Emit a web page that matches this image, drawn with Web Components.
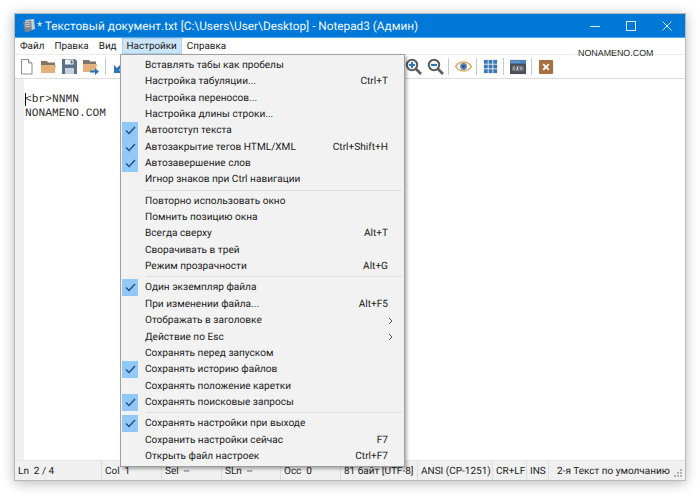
<!doctype html>
<html lang="ru">
<head>
<meta charset="utf-8">
<title>Notepad3</title>
<style>
  html, body { margin: 0; height: 100%; background: #fff; }
  body { padding: 13px 14px 0; box-sizing: border-box; font: 10px Roboto, sans-serif; color: #1a1a1a; overflow: hidden; text-rendering: geometricPrecision; }
</style>
</head>
<body>
<np-window>
  <np-titlebar slot="title">* Текстовый документ.txt [C:\Users\User\Desktop] - Notepad3 (Админ)</np-titlebar>
  <np-menubar slot="menubar"></np-menubar>
  <np-toolbar slot="toolbar"></np-toolbar>
  <np-editor slot="editor"></np-editor>
  <np-statusbar slot="status"></np-statusbar>
  <np-menu slot="overlay"></np-menu>
</np-window>

<script>
// данные меню: check, подпись, шорткат, стрелка подменю
const MENU = [
  [
    { label: 'Вставлять табы как пробелы' },
    { label: 'Настройка табуляции...', key: 'Ctrl+T' },
    { label: 'Настройка переносов...' },
    { label: 'Настройка длины строки...' },
    { label: 'Автоотступ текста', on: true },
    { label: 'Автозакрытие тегов HTML/XML', key: 'Ctrl+Shift+H', on: true },
    { label: 'Автозавершение слов', on: true },
    { label: 'Игнор знаков при Ctrl навигации' },
  ],
  [
    { label: 'Повторно использовать окно' },
    { label: 'Помнить позицию окна' },
    { label: 'Всегда сверху', key: 'Alt+T' },
    { label: 'Сворачивать в трей' },
    { label: 'Режим прозрачности', key: 'Alt+G' },
  ],
  [
    { label: 'Один экземпляр файла', on: true },
    { label: 'При изменении файла...', key: 'Alt+F5' },
    { label: 'Отображать в заголовке', sub: true },
    { label: 'Действие по Esc', sub: true },
    { label: 'Сохранять перед запуском' },
    { label: 'Сохранять историю файлов', on: true },
    { label: 'Сохранять положение каретки' },
    { label: 'Сохранять поисковые запросы', on: true },
  ],
  [
    { label: 'Сохранять настройки при выходе', on: true },
    { label: 'Сохранить настройки сейчас', key: 'F7' },
    { label: 'Открыть файл настроек', key: 'Ctrl+F7' },
  ],
]

const STATUS = [
  ['Ln&nbsp; 2 / 4', 87], ['Col&nbsp; 1', 60], ['Sel&nbsp; --', 60], ['SLn&nbsp; --', 59],
  ['Occ&nbsp; 0', 60], ['81 байт [UTF-8]', 77], ['ANSI (CP-1251)', 75],
  ['CR+LF', 34], ['INS', 22], ['2-я Текст по умолчанию', 0],
]

const ICONS = {
  doc: '<path d="M2.500 1.500h7l3.500 3.500v11h-10.500z" fill="#fff" stroke="#8a8a8a"/><path d="M9.500 1.500v3.500h3.500" fill="#eee" stroke="#8a8a8a"/>',
  open: '<path d="M1 3h6l1 1.500h7v10h-14z" fill="#7f7468"/><path d="M1 7h15l-1.500 8h-13.500z" fill="#e3b27a"/>',
  save: '<path d="M1 1h13l2 2v13h-15z" fill="#5c7187"/><rect x="4" y="1.500" width="8.500" height="5" fill="#eef2f6"/><rect x="4" y="10" width="9" height="6" fill="#c8d2dc"/><rect x="9.500" y="2.500" width="2" height="3" fill="#5c7187"/>',
  saveas: '<path d="M1 2h6l1 1.500h6v10h-13z" fill="#7f7468"/><path d="M1 6h14l-1.500 8h-12.500z" fill="#e3b27a"/><path d="M8 12.500h5v-2.500l4 3.500-4 3.500v-2.500h-5z" fill="#2f74b8"/>',
  undo: '<path d="M14.500 3.500l-8 8" stroke="#2f74b8" stroke-width="3" fill="none"/><path d="M3 7v8h8z" fill="#2f74b8"/>',
  zoomin: '<circle cx="7" cy="7" r="5.200" fill="#eef3f8" stroke="#5a5a5a" stroke-width="2"/><path d="M11 11l5 5" stroke="#5a5a5a" stroke-width="2.600"/><path d="M4 7h6M7 4v6" stroke="#2f74b8" stroke-width="2"/>',
  zoomout: '<circle cx="7" cy="7" r="5.200" fill="#eef3f8" stroke="#5a5a5a" stroke-width="2"/><path d="M11 11l5 5" stroke="#5a5a5a" stroke-width="2.600"/><path d="M4 7h6" stroke="#2f74b8" stroke-width="2"/>',
  eye: '<path d="M.5 8.500c4-6 12-6 16 0-4 6-12 6-16 0z" fill="#fff" stroke="#e0a860" stroke-width="1.500"/><circle cx="8.500" cy="8.500" r="3.400" fill="#5b84ad"/><circle cx="8.500" cy="8.500" r="1.300" fill="#24456b"/>',
  grid: '<g fill="#3c76b3"><rect x="1" y="1" width="4.400" height="4.400"/><rect x="6.300" y="1" width="4.400" height="4.400"/><rect x="11.600" y="1" width="4.400" height="4.400"/><rect x="1" y="6.300" width="4.400" height="4.400"/><rect x="6.300" y="6.300" width="4.400" height="4.400"/><rect x="11.600" y="6.300" width="4.400" height="4.400"/><rect x="1" y="11.600" width="4.400" height="4.400"/><rect x="6.300" y="11.600" width="4.400" height="4.400"/><rect x="11.600" y="11.600" width="4.400" height="4.400"/></g>',
  code: '<rect x="0" y="1" width="17" height="15" fill="#4a4f57"/><rect x="0" y="1" width="17" height="4" fill="#4a83bf"/><path d="M1.500 3h1M4 3h1M6.500 3h1M9 3h1" stroke="#cfe0f0"/><rect x="2" y="7" width="13" height="6" fill="#6a6e75"/><path d="M5 8.500l-1.500 1.500L5 11.500M8.500 8l-1 4M11 8.500l1.500 1.500-1.500 1.500" stroke="#eee" fill="none"/>',
  close: '<rect x="1" y="1" width="15" height="15" rx="1" fill="#a66f44"/><path d="M5.500 5.500l6 6M11.500 5.500l-6 6" stroke="#fff" stroke-width="2"/>',
}

function define(name, css, html) {
  customElements.define(name, class extends HTMLElement {
    constructor() {
      super()
      const tpl = document.createElement('template')
      tpl.innerHTML = `<style>${css}</style>${typeof html === 'function' ? html() : html}`
      this.attachShadow({ mode: 'open' }).appendChild(tpl.content.cloneNode(true))
    }
  })
}

define('np-window', `
  :host { display: block; position: relative; width: 672px; height: 468px; }
  .frame {
    position: relative; height: 100%; box-sizing: border-box;
    display: flex; flex-direction: column; background: #f0f0f0;
    border: 1px solid #b9b9b9; box-shadow: 0 2px 12px rgba(0,0,0,.28);
  }
`, `
  <div class="frame">
    <slot name="title"></slot>
    <slot name="menubar"></slot>
    <slot name="toolbar"></slot>
    <slot name="editor"></slot>
    <slot name="status"></slot>
    <slot name="overlay"></slot>
  </div>
`)

define('np-titlebar', `
  :host { display: flex; align-items: center; height: 24px; background: #0078d7; box-shadow: inset 0 -1px #5aa9e6; color: #fff; font: 11.800px Roboto, sans-serif; flex: none; }
  svg { flex: none; }
  .doc { margin: 0 0 0 6px; }
  .text { flex: 1; padding-left: 0; white-space: nowrap; overflow: hidden; opacity: .95; }
  .btn { width: 36px; height: 24px; display: flex; align-items: center; justify-content: center; flex: none; }
`, `
  <svg class="doc" width="16" height="16" viewBox="0 0 16 16"><path d="M4 2l9-1 1 10-9 3z" fill="#c9ced4"/><path d="M2 4l8-1.500 1 10-7 2z" fill="#7d858f"/><path d="M4 5l5-1M4 7l5-1M4.500 9l5-1" stroke="#dfe3e8" stroke-width=".8"/></svg>
  <span class="text"><slot></slot></span>
  <span class="btn"><svg width="10" height="10" viewBox="0 0 10 10"><path d="M0 5.500h10" stroke="#d9ecfa"/></svg></span>
  <span class="btn"><svg width="10" height="10" viewBox="0 0 10 10"><rect x=".5" y=".5" width="9" height="9" fill="none" stroke="#d9ecfa"/></svg></span>
  <span class="btn"><svg width="10" height="10" viewBox="0 0 10 10"><path d="M.5.500l9 9M9.500.500l-9 9" stroke="#d9ecfa"/></svg></span>
`)

define('np-menubar', `
  :host { display: flex; flex: none; height: 16px; background: #fff; border-bottom: 1px solid #ececec; position: relative; font: 9.900px/18px Roboto, sans-serif; color: #1a1a1a; }
  span { padding: 0 5px; white-space: nowrap; height: 16px; }
  span:first-child { padding-left: 3px; }
  .open { background: #cce4f7; box-shadow: inset 0 0 0 1px #a9d2f0; }
  .mark { position: absolute; left: 563px; top: 9px; padding: 0; height: auto; font: 8.900px/12px "Liberation Sans", sans-serif; color: #222; }
`, `
  <span>Файл</span><span>Правка</span><span>Вид</span><span class="open">Настройки</span><span>Справка</span>
  <span class="mark">NONAMENO.COM</span>
`)

define('np-toolbar', `
  :host { display: flex; flex: none; align-items: center; height: 24px; padding-left: 4px; background: #fff; border-bottom: 1px solid #dcdcdc; box-sizing: border-box; }
  .i { display: inline-flex; width: 17px; height: 17px; flex: none; margin-right: 4px; }
  .sep { width: 1px; height: 17px; background: #c8c8c8; margin: 0 5px 0 2px; flex: none; }
  .right { margin-left: 273px; display: flex; align-items: center; }
  .right .sep { margin: 0 6px 0 0; }
  .right .i { margin-right: 4px; }
  .right .i:first-child { margin-right: 5px; }
  .right .g { width: 16px; height: 16px; margin-right: 5px; }
  .right .narrow { width: 15px; height: 15px; }
`, () => {
  const i = (n, c = '') => `<svg class="i ${c}" viewBox="0 0 17 17">${ICONS[n]}</svg>`
  return `${i('doc')}${i('open')}${i('save')}${i('saveas')}<span class="sep"></span>${i('undo')}
    <div class="right">${i('zoomin')}${i('zoomout')}<span class="sep"></span>${i('eye')}<span class="sep"></span>${i('grid', 'g narrow')}<span class="sep"></span>${i('code', 'g')}<span class="sep"></span>${i('close', 'g')}</div>`
})

define('np-editor', `
  :host { display: flex; flex: 1; min-height: 0; background: #fff; }
  .gutter { width: 9px; background: #f0f0f0; flex: none; }
  pre { margin: 0; padding: 14px 0 0 1px; font: 11.25px/14px "Liberation Mono", monospace; color: #2a2a2a; }
  .caret { display: inline-block; width: 1px; height: 13px; background: #000; vertical-align: top; margin-right: -1px; }
`, `
  <div class="gutter"></div>
  <pre><span class="caret"></span>&lt;br&gt;NNMN
NONAMENO.COM</pre>
`)

define('np-statusbar', `
  :host { display: flex; flex: none; height: 19px; align-items: center; background: #f0f0f0; border-top: 1px solid #e4e4e4; font: 10px Roboto, sans-serif; color: #222; position: relative; }
  span { flex: none; box-sizing: border-box; padding-left: 3px; white-space: nowrap; border-right: 1px solid #dcdcdc; height: 100%; line-height: 22px; overflow: hidden; }
  span:first-child { padding-left: 0; }
  span:last-of-type { flex: 1; border: 0; padding-left: 8px; }
  svg { position: absolute; right: 2px; bottom: 2px; }
`, () => STATUS.map(([t, w]) => `<span style="${w ? `width:${w}px` : ''}">${t}</span>`).join('') +
  '<svg width="10" height="10" viewBox="0 0 10 10" fill="#b4b4b4"><rect x="7" y="1" width="2" height="2"/><rect x="4" y="4" width="2" height="2"/><rect x="7" y="4" width="2" height="2"/><rect x="1" y="7" width="2" height="2"/><rect x="4" y="7" width="2" height="2"/><rect x="7" y="7" width="2" height="2"/></svg>')

define('np-menu-item', `
  :host { display: grid; grid-template-columns: 23px 1fr auto 16px; align-items: center; height: 16.35px; white-space: nowrap; font: 10.100px/16px Roboto, sans-serif; color: #1a1a1a; }
  .check { height: 100%; display: flex; align-items: center; justify-content: center; width: 16px; }
  :host([on]) .check { background: #90c8f6; }
  .label, .key { padding-top: 1px; }
  .key { text-align: right; }
  .sub { font-size: 0; }
`, `
  <span class="check"><slot name="check"></slot></span>
  <span class="label"><slot></slot></span>
  <span class="key"><slot name="key"></slot></span>
  <span class="sub"><slot name="sub"></slot></span>
`)

define('np-menu', `
  :host { display: block; position: absolute; left: 105px; top: 40px; width: 285px; height: 413px; box-sizing: border-box; padding: 2px 0 0 1px; background: #f2f2f2; border: 1px solid #a0a0a0; box-shadow: 2px 2px 3px rgba(0,0,0,.3); }
  hr { border: 0; border-top: 1px solid #dedede; margin: 2px 2px 2px 24px; height: 0; }
  svg { display: block; }
`, () => MENU.map(group => group.map(m => `
    <np-menu-item ${m.on ? 'on' : ''}>
      ${m.on ? '<svg slot="check" width="11" height="9" viewBox="0 0 11 9"><path d="M1 4.500l3 3 6-6.500" fill="none" stroke="#1e4f80" stroke-width="1.400"/></svg>' : ''}
      ${m.label}
      ${m.key ? `<span slot="key">${m.key}</span>` : ''}
      ${m.sub ? '<svg slot="sub" width="6" height="8" viewBox="0 0 6 8"><path d="M1 1l3 3-3 3" fill="none" stroke="#555"/></svg>' : ''}
    </np-menu-item>`).join('')).join('<hr>'))
</script>
</body>
</html>
